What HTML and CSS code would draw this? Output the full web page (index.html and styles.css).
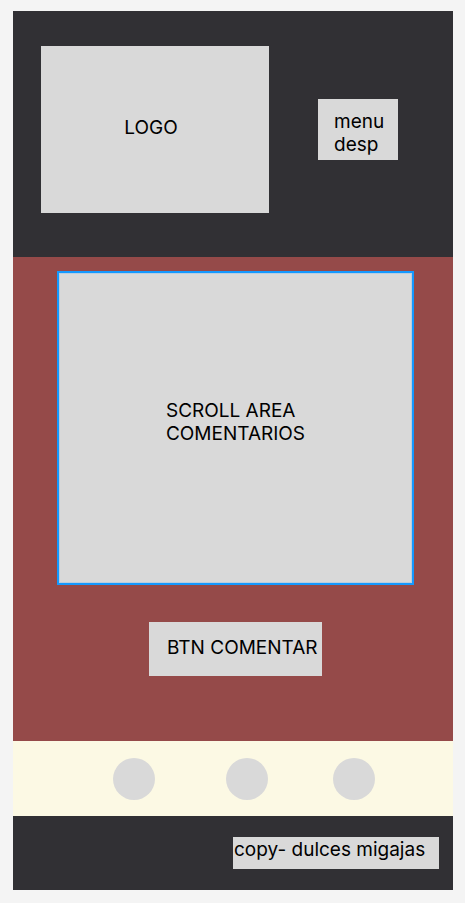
FILE: index.html
```html
<!DOCTYPE html>
<html lang="es">
<head>
<meta charset="utf-8">
<meta name="viewport" content="width=device-width, initial-scale=1">
<title>Dulces migajas</title>
<link rel="stylesheet" href="styles.css">
</head>
<body>
<div class="page">
  <header class="header">
    <div class="logo">LOGO</div>
    <button class="menu" type="button">menu<br>desp</button>
  </header>
  <main class="main">
    <section class="comments">
      <p class="comments-text">SCROLL AREA<br>COMENTARIOS</p>
    </section>
    <button class="comment-button" type="button">BTN COMENTAR</button>
  </main>
  <div class="social">
    <span class="dot"></span>
    <span class="dot"></span>
    <span class="dot"></span>
  </div>
  <footer class="footer">
    <p class="copy">copy- dulces migajas</p>
  </footer>
</div>
</body>
</html>
```
FILE: styles.css
```css
* {
  box-sizing: border-box;
}

body {
  margin: 0;
  padding: 11px 12px 13px 13px;
  background: #f4f4f4;
  color: #000;
  font: 400 19px/23px Inter, "Liberation Sans", sans-serif;
}

p {
  margin: 0;
}

button {
  border: 0;
  border-radius: 0;
  background: #d9d9d9;
  color: inherit;
  font: inherit;
  text-align: left;
}

.header {
  display: grid;
  grid-template-columns: 228fr 80fr;
  column-gap: 49px;
  align-items: center;
  padding: 35px 55px 44px 28px;
  background: #313034;
}

.logo {
  display: grid;
  place-items: center;
  min-height: 167px;
  padding: 0 8px 4px 0;
  background: #d9d9d9;
}

.menu {
  min-width: 0;
  padding: 11px 0 4px 16px;
}

.main {
  display: flex;
  flex-direction: column;
  align-items: center;
  gap: 37px;
  padding: 14px 39px 65px 44px;
  background: #954a49;
}

.comments {
  display: grid;
  place-items: center;
  width: 100%;
  min-height: 314px;
  padding-bottom: 12px;
  border: 2px solid #1499ff;
  background: #d9d9d9;
  box-shadow: inset 0 0 0 1px #b9cee0;
}

.comment-button {
  min-width: 173px;
  min-height: 54px;
  padding: 0 4px 3px 18px;
}

.social {
  display: grid;
  grid-template-columns: 113fr 107fr 42fr;
  padding: 17px 78px 16px 100px;
  background: #fcf9e4;
}

.dot {
  width: 42px;
  height: 42px;
  border-radius: 50%;
  background: #d9d9d9;
}

.footer {
  display: flex;
  justify-content: flex-end;
  padding: 21px 14px;
  background: #313034;
}

.copy {
  min-width: 206px;
  min-height: 32px;
  padding: 1px 8px 8px 1px;
  background: #d9d9d9;
}
```
